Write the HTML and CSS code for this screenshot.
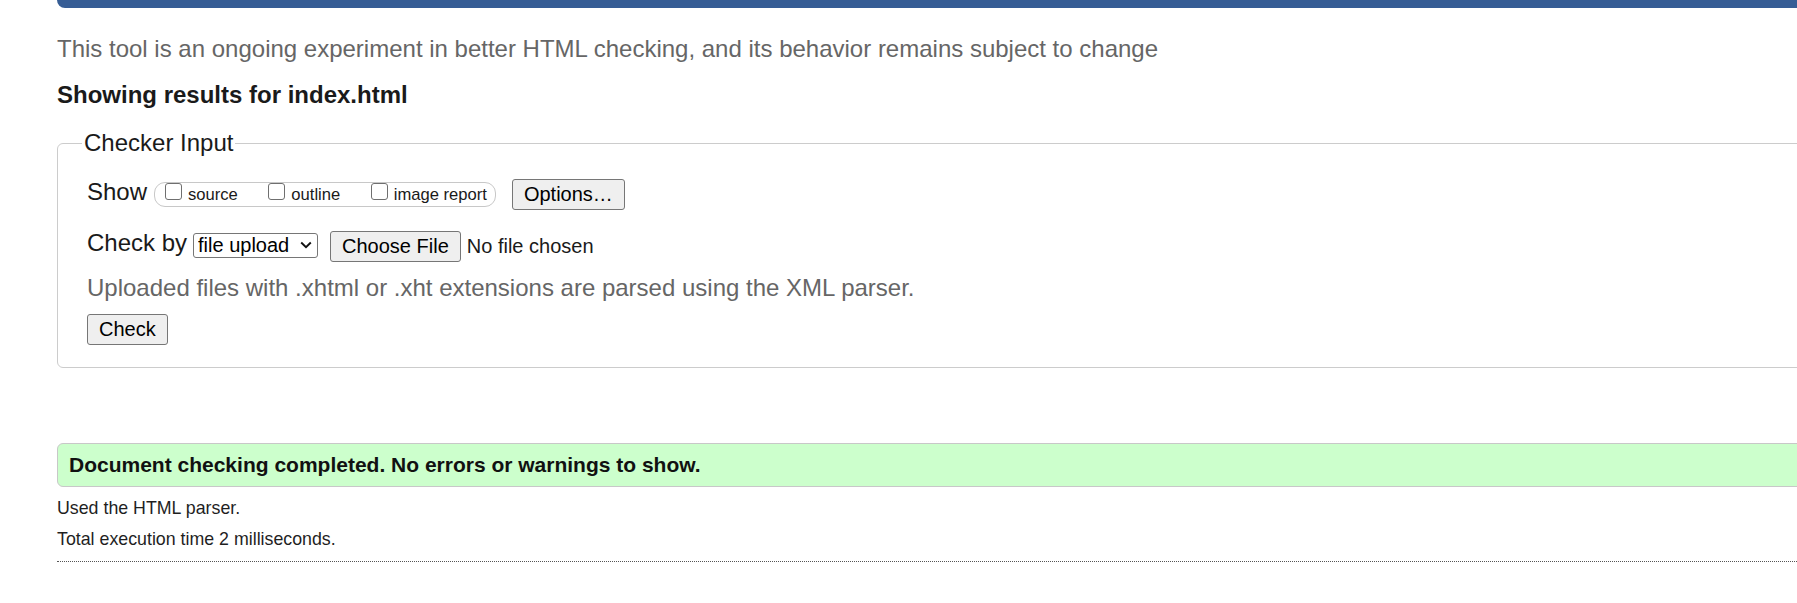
FILE: index.html
```html
<!DOCTYPE html>
<html lang="en">
<head>
<meta charset="utf-8">
<title>Nu Html Checker</title>
<link rel="stylesheet" href="styles.css">
</head>
<body>
<div class="page">
  <div class="topbar"></div>
  <p class="intro">This tool is an ongoing experiment in better HTML checking, and its behavior remains subject to change</p>
  <h2 class="results-title">Showing results for index.html</h2>
  <form class="checker">
    <fieldset class="checker-input">
      <legend class="legend">Checker Input</legend>
      <div class="row row-show">
        <span class="row-label">Show</span>
        <span class="pill">
          <label class="opt"><input type="checkbox" class="cb"><span class="opt-text">source</span></label>
          <label class="opt"><input type="checkbox" class="cb"><span class="opt-text">outline</span></label>
          <label class="opt"><input type="checkbox" class="cb"><span class="opt-text">image report</span></label>
        </span>
        <button type="button" class="btn btn-options">Options…</button>
      </div>
      <div class="row row-checkby">
        <span class="row-label label-checkby">Check by</span>
        <span class="select-wrap">
          <select class="select"><option>file upload</option></select>
          <svg class="chev" width="12" height="8" viewBox="0 0 12 8" aria-hidden="true"><path d="M1.2 1.5 L6 6.2 L10.8 1.5" fill="none" stroke="#111" stroke-width="1.9"/></svg>
        </span>
        <button type="button" class="btn btn-file">Choose File</button>
        <span class="file-status">No file chosen</span>
      </div>
      <p class="note">Uploaded files with .xhtml or .xht extensions are parsed using the XML parser.</p>
      <button type="button" class="btn btn-check">Check</button>
    </fieldset>
  </form>
  <div class="success">Document checking completed. No errors or warnings to show.</div>
  <p class="meta meta-first">Used the HTML parser.</p>
  <p class="meta">Total execution time 2 milliseconds.</p>
  <hr class="rule">
</div>
</body>
</html>
```

FILE: styles.css
```css
html, body {
  margin: 0;
  padding: 0;
  overflow: hidden;
  background: #fff;
}

body {
  font-family: "Liberation Sans", Arial, Helvetica, sans-serif;
  color: #1a1a1a;
}

.page {
  margin-left: 57px;
  margin-right: -120px;
}

.topbar {
  height: 8px;
  background: #365d95;
  border-bottom-left-radius: 8px;
}

.intro {
  margin: 27px 0 0;
  font-size: 24px;
  line-height: 28px;
  color: #666;
}

.results-title {
  margin: 18px 0 0;
  font-size: 24px;
  line-height: 28px;
  font-weight: bold;
  color: #1a1a1a;
}

.checker {
  margin: 0;
}

.checker-input {
  margin: 20px 0 0;
  padding: 22px 0 22px 29px;
  border: 1px solid #cccccc;
  border-radius: 6px;
  min-width: 0;
}

.legend {
  margin-left: -5px;
  padding: 0 2px;
  font-size: 24px;
  line-height: 28px;
  color: #1a1a1a;
}

.row {
  display: flex;
  align-items: flex-start;
}

.row-label {
  font-size: 24px;
  line-height: 28px;
  margin-top: -1px;
  white-space: nowrap;
}

.pill {
  display: flex;
  align-items: flex-start;
  box-sizing: border-box;
  height: 25px;
  margin: 3px 0 0 7px;
  padding: 0 8px 0 10px;
  border: 1px solid #c8c8c8;
  border-radius: 11px;
}

.opt {
  display: flex;
  align-items: flex-start;
}

.opt + .opt {
  margin-left: 30.5px;
}

.cb {
  appearance: none;
  -webkit-appearance: none;
  box-sizing: border-box;
  width: 17px;
  height: 17px;
  margin: 0;
  border: 1px solid #6f6f6f;
  border-radius: 3px;
  background: #fff;
}

.opt-text {
  margin: 1px 0 0 6px;
  font-size: 16.6px;
  line-height: 21px;
  white-space: nowrap;
}

.btn {
  box-sizing: border-box;
  height: 31px;
  padding: 0 11px;
  border: 1px solid #767676;
  border-radius: 3px;
  background: #efefef;
  color: #000;
  font-family: "Liberation Sans", Arial, Helvetica, sans-serif;
  font-size: 20px;
  line-height: 29px;
  white-space: nowrap;
}

.btn-options {
  margin-left: 16px;
}

.row-checkby {
  margin-top: 21px;
}

.label-checkby {
  margin-top: -2px;
}

.select-wrap {
  position: relative;
  display: block;
  margin: 2px 0 0 6px;
}

.select {
  appearance: none;
  -webkit-appearance: none;
  display: block;
  box-sizing: border-box;
  width: 125px;
  height: 25px;
  margin: 0;
  padding: 0 0 0 4px;
  border: 1px solid #767676;
  border-radius: 3px;
  background: #fff;
  color: #000;
  font-family: "Liberation Sans", Arial, Helvetica, sans-serif;
  font-size: 20px;
  line-height: 23px;
}

.chev {
  position: absolute;
  right: 6px;
  top: 8px;
  pointer-events: none;
}

.btn-file {
  margin-left: 12px;
  padding: 0 11px;
}

.file-status {
  margin-left: 6px;
  font-size: 20px;
  line-height: 31px;
  color: #1a1a1a;
  white-space: nowrap;
}

.note {
  margin: 12px 0 0;
  font-size: 24px;
  line-height: 28px;
  color: #666;
}

.btn-check {
  display: block;
  margin-top: 12px;
  padding: 0 11px;
}

.success {
  margin-top: 75px;
  padding: 8px 11px 9px;
  border: 1px solid #c8c8c8;
  border-radius: 6px;
  background: #ccffcc;
  font-size: 21px;
  line-height: 25px;
  font-weight: bold;
  color: #111;
}

.meta {
  margin: 9px 0 0;
  font-size: 17.8px;
  line-height: 22px;
  color: #1f1f1f;
}

.meta-first {
  margin-top: 10px;
}

.rule {
  height: 0;
  margin: 11px 0 0;
  border: 0;
  border-top: 1px dotted #555;
}
```
